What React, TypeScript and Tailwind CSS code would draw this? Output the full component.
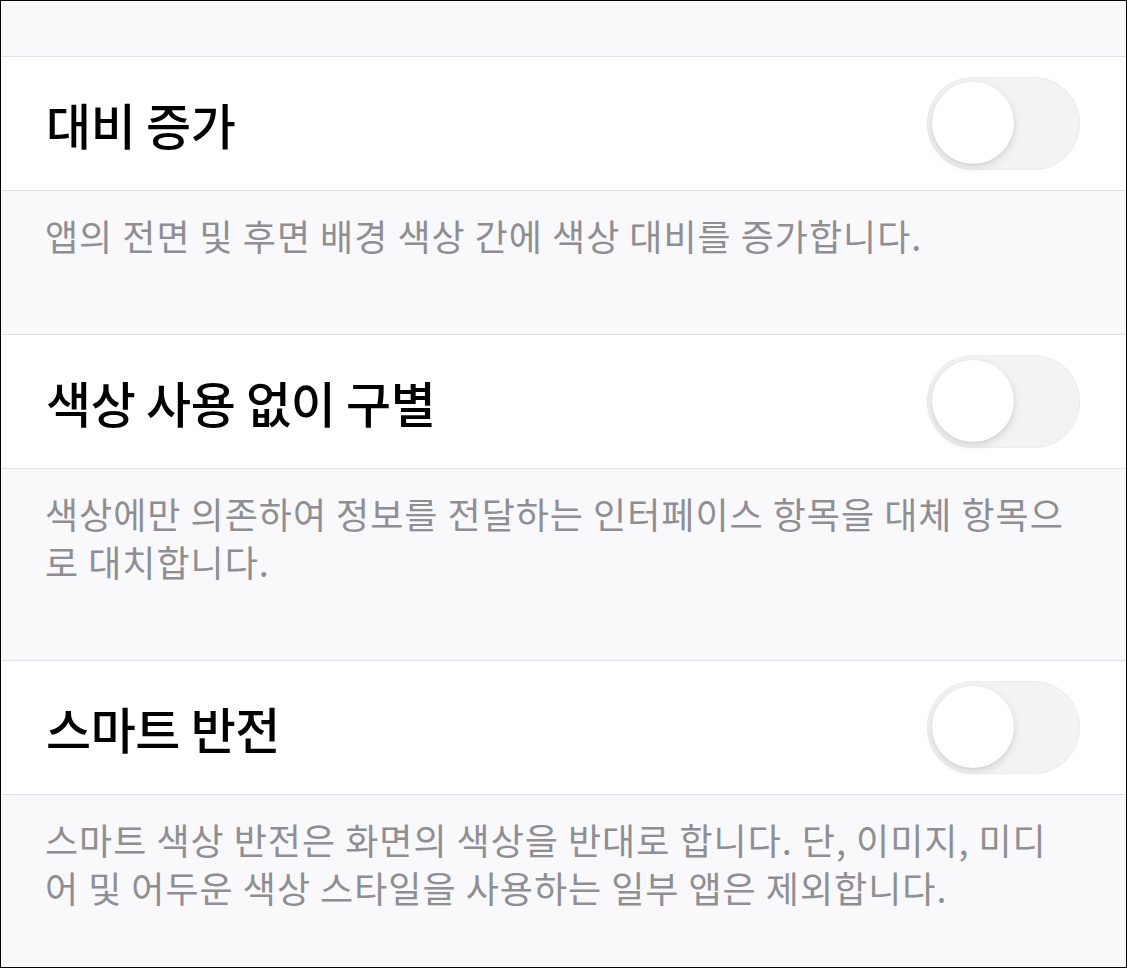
import React from "react";

const font = { fontFamily: '"Noto Sans CJK KR", "Noto Sans", sans-serif' };

function Toggle() {
  return (
    <div className="relative h-[93px] w-[153px] shrink-0 rounded-full bg-[#f3f3f4] shadow-[inset_0_0_0_1px_#ececee]">
      <div className="absolute left-[5px] top-[5px] h-[82px] w-[82px] rounded-full bg-white shadow-[0_3px_8px_rgba(0,0,0,0.13),0_1px_2px_rgba(0,0,0,0.06)]" />
    </div>
  );
}

function Section({ title, lines }: { title: string; lines: string[] }) {
  return (
    <div>
      <div className="flex h-[135px] items-center justify-between border-y border-[#e1e1e4] bg-white pl-[45px] pr-[46px]">
        <div className="text-[49px] font-medium leading-none tracking-[-0.4px] text-black" style={font}>
          {title}
        </div>
        <Toggle />
      </div>
      <div
        className="pl-[44px] pr-[20px] pt-[20px] pb-[76px] text-[36px] leading-[48px] tracking-[1px] text-[#8e8e93] whitespace-nowrap"
        style={font}
      >
        {lines.map((l, i) => (
          <div key={i}>{l}</div>
        ))}
      </div>
    </div>
  );
}

export default function App() {
  return (
    <div className="h-[968px] w-[1127px] overflow-hidden border border-black bg-[#f9f9fb]">
      <div className="h-[55px]" />
      <Section title="대비 증가" lines={["앱의 전면 및 후면 배경 색상 간에 색상 대비를 증가합니다."]} />
      <div className="-mt-px">
        <Section
          title="색상 사용 없이 구별"
          lines={["색상에만 의존하여 정보를 전달하는 인터페이스 항목을 대체 항목으", "로 대치합니다."]}
        />
      </div>
      <div className="-mt-px">
        <Section
          title="스마트 반전"
          lines={["스마트 색상 반전은 화면의 색상을 반대로 합니다. 단, 이미지, 미디", "어 및 어두운 색상 스타일을 사용하는 일부 앱은 제외합니다."]}
        />
      </div>
    </div>
  );
}
